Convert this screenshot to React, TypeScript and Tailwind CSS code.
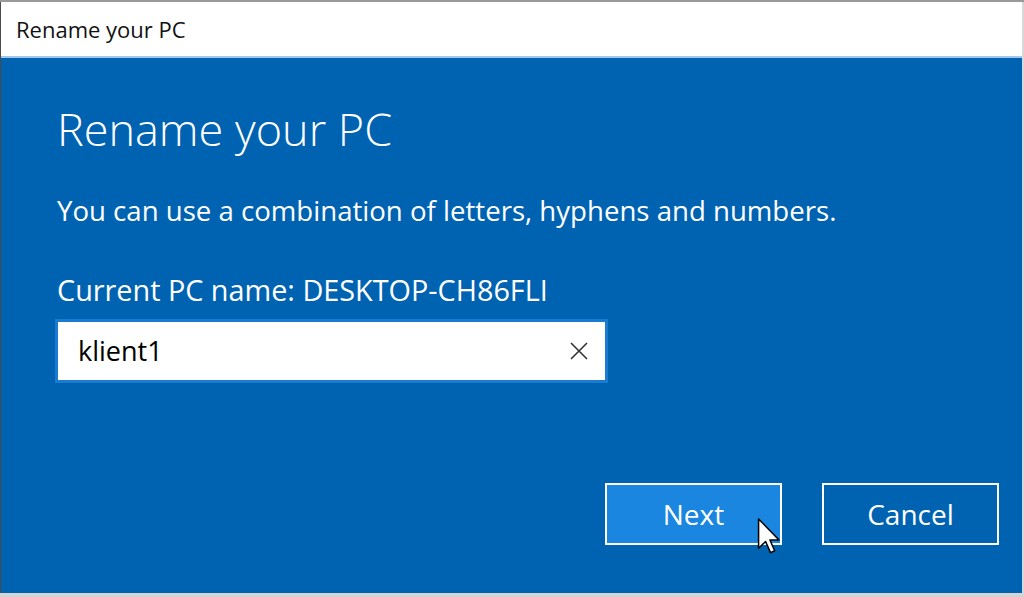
import React from "react";

const font = { fontFamily: '"Open Sans", "Noto Sans", sans-serif' };

const Cursor = () => (
  <svg
    className="absolute left-[757px] top-[518px]"
    width="24"
    height="36"
    viewBox="0 0 12 19"
  >
    <path
      d="M0.5 0.5 L0.5 16 L4.2 12.4 L6.8 18.3 L9 17.3 L6.5 11.6 L11.3 11.6 Z"
      fill="#ffffff"
      stroke="#000000"
      strokeWidth="0.8"
      strokeLinejoin="round"
    />
  </svg>
);

const App = () => {
  return (
    <div
      className="relative w-[1024px] h-[597px] overflow-hidden bg-[#cfcfcf] flex flex-col"
      style={font}
    >
      {/* top edge */}
      <div className="h-[2px] bg-[#9a9a9a]" />

      <div className="flex-1 flex border-l border-[#4a4a4a] border-r-2 border-r-[#d8d8d8]">
        <div className="flex-1 flex flex-col">
          {/* Title bar */}
          <div className="h-[56px] bg-white flex items-center pl-[15px] border-b-2 border-[#9fc8ec]">
            <span className="text-[22px] text-[#111]">Rename your PC</span>
          </div>

          {/* Blue body */}
          <div className="flex-1 bg-[#0063b1] text-white pl-[56px] pr-[23px] flex flex-col">
            <h1 className="mt-[43px] text-[45px] font-light leading-[56px]">
              Rename your PC
            </h1>

            <p className="mt-[37px] text-[27.6px] leading-[32px]">
              You can use a combination of letters, hyphens and numbers.
            </p>

            <p className="mt-[48px] text-[28.8px] leading-[32px]">
              Current PC name: DESKTOP-CH86FLI
            </p>

            <div className="mt-[13px] -ml-[2px] w-[553px] h-[64px] border-[3px] border-[#1a7bd0] bg-white flex items-center pl-[20px] pr-[17px]">
              <span className="flex-1 text-[27px] text-black">klient1</span>
              <svg width="18" height="18" viewBox="0 0 18 18">
                <path
                  d="M1 1 L17 17 M17 1 L1 17"
                  stroke="#333"
                  strokeWidth="1.6"
                />
              </svg>
            </div>

            <div className="mt-auto mb-[48px] flex justify-end gap-[40px]">
              <button className="w-[177px] h-[62px] border-2 border-white bg-[#1a86e0] text-[28px] text-white">
                Next
              </button>
              <button className="w-[177px] h-[62px] border-2 border-white bg-transparent text-[28px] text-white">
                Cancel
              </button>
            </div>
          </div>
        </div>
      </div>

      {/* bottom edge */}
      <div className="h-[4px] bg-[#d4d4d4]" />

      <Cursor />
    </div>
  );
};

export default App;
